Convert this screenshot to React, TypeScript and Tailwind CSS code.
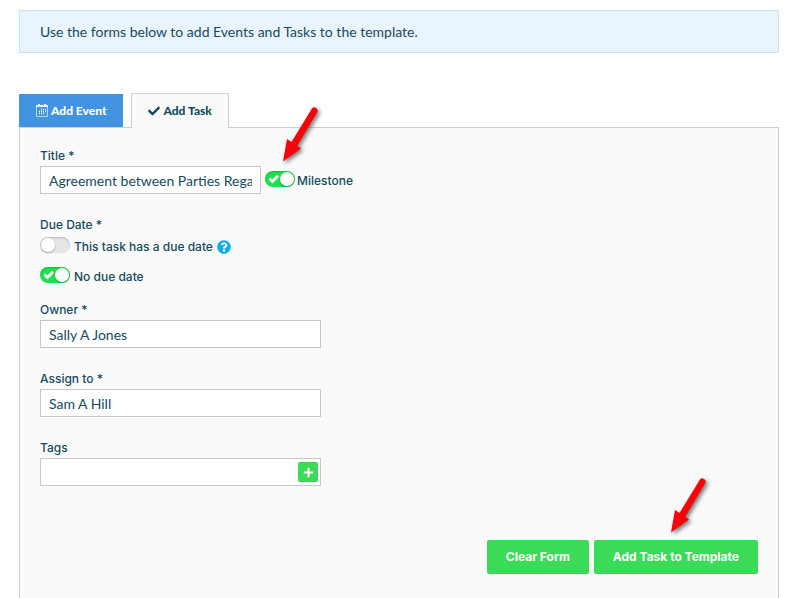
import { useState } from 'react';
import type { ReactNode } from 'react';
import { FaCheck, FaPlus, FaQuestionCircle } from 'react-icons/fa';

function CalendarIcon() {
  return (
    <svg viewBox="0 0 12 13" className="w-3 h-[13px]" fill="none" stroke="currentColor">
      <path d="M0.500 3v9.500h11V3" strokeOpacity="0.65" />
      <path d="M0 2h12" strokeWidth="2" strokeOpacity="0.9" />
      <path d="M2 0.500h2M8 0.500h2" />
      <path d="M5 5.500h1M7 5.500h1M9 5.500h1M3 7.500h1M5 7.500h1M7 7.500h1M9 7.500h1M3 9.500h1M5 9.500h1M7 9.500h1" strokeWidth="1.300" />
    </svg>
  );
}

function Arrow({ className }: { className: string }) {
  return (
    <svg
      viewBox="0 0 50 68"
      className={`absolute w-[50px] h-[68px] pointer-events-none drop-shadow-[2px_2px_2px_rgba(0,0,0,0.55)] ${className}`}
      fill="#fb0007"
      aria-hidden="true"
    >
      <path d="M5 59.500L9 37L13.500 40L33.800 6.800A3.200 3.200 0 0 1 39.300 10L19.200 43.800L23 46.500Z" />
    </svg>
  );
}

function Toggle({ id, checked, onChange }: { id: string; checked: boolean; onChange: (v: boolean) => void }) {
  return (
    <span className="relative inline-flex w-[30px] h-4 shrink-0">
      <input
        id={id}
        type="checkbox"
        checked={checked}
        onChange={(e) => onChange(e.target.checked)}
        className="appearance-none w-full h-full rounded-full bg-[#e6e6e6] checked:bg-[#1fe04f] shadow-[inset_0_1px_2px_rgba(0,0,0,0.2)] cursor-pointer"
      />
      {checked && (
        <svg viewBox="0 0 12 10" className="absolute left-[3px] top-[3px] w-3 h-[10px] pointer-events-none" fill="none" stroke="#fff" strokeWidth="2.800">
          <path d="M1.500 4.500L4.500 7.500L10 1.800" />
        </svg>
      )}
      <span
        className={`absolute top-px w-[14px] h-[14px] rounded-full bg-white pointer-events-none shadow-[0_1px_2px_rgba(0,0,0,0.3)] ${checked ? 'right-px' : 'left-px'}`}
      />
    </span>
  );
}

function Field({ id, label, children }: { id: string; label: string; children: ReactNode }) {
  return (
    <div className="mb-[23px]">
      <label htmlFor={id} className="block mb-[2px] leading-4">{label}</label>
      {children}
    </div>
  );
}

const INPUT = 'h-7 px-2 border border-[#c8c8c8] bg-white font-[Lato,sans-serif] text-sm font-normal outline-none';
const BUTTON = 'h-[34px] px-[19px] rounded-xs bg-[#3bdb57] text-white font-bold hover:bg-[#32c94d]';

export default function App() {
  const [title, setTitle] = useState('Agreement between Parties Regarding Terms');
  const [owner, setOwner] = useState('Sally A Jones');
  const [assignee, setAssignee] = useState('Sam A Hill');
  const [tags, setTags] = useState('');
  const [milestone, setMilestone] = useState(true);
  const [hasDueDate, setHasDueDate] = useState(false);

  const clearForm = () => {
    setTitle('');
    setOwner('');
    setAssignee('');
    setTags('');
    setMilestone(false);
  };

  return (
    <main className="min-h-screen flex flex-col pl-[19px] pr-[22px] pt-[10px] bg-white text-[#174a5e]">
      <div className="border border-[#c5e3fc] bg-[#e9f4ff] px-5 py-[10px] font-[Lato,sans-serif] text-sm leading-[21px]">
        Use the forms below to add Events and Tasks to the template.
      </div>

      <div role="tablist" className="relative mt-10 flex items-end gap-2 font-[Lato,sans-serif] text-[12px] font-black">
        <button role="tab" aria-selected={false} className="h-[33px] px-[17px] flex items-center gap-[3px] bg-[#4294e3] text-white">
          <CalendarIcon />
          Add Event
        </button>
        <button role="tab" aria-selected={true} className="-mb-px h-[35px] px-4 flex items-center gap-[3px] border border-b-0 border-[#cfcfcf] bg-[#fafafa]">
          <FaCheck className="w-3 h-3" />
          Add Task
        </button>
      </div>

      <form
        onSubmit={(e) => e.preventDefault()}
        className="flex-1 border border-b-0 border-[#cfcfcf] bg-[#fafafa] px-5 pt-5 pb-6 font-[Inter,sans-serif] text-[12px] font-medium"
      >
        <Field id="title" label="Title *">
          <div className="flex items-center gap-1">
            <input id="title" value={title} onChange={(e) => setTitle(e.target.value)} className={`w-[221px] ${INPUT}`} />
            <div className="relative flex items-start gap-[2px] pt-[2px]">
              <Toggle id="milestone" checked={milestone} onChange={setMilestone} />
              <label htmlFor="milestone" className="leading-5">Milestone</label>
              <Arrow className="left-[13px] -top-[67px]" />
            </div>
          </div>
        </Field>

        <fieldset className="mb-[15px]">
          <legend className="mb-1 leading-4">Due Date *</legend>
          <div className="flex items-start gap-1 mb-[10px]">
            <Toggle id="has-due-date" checked={hasDueDate} onChange={setHasDueDate} />
            <label htmlFor="has-due-date" className="leading-5">This task has a due date</label>
            <FaQuestionCircle className="mt-[3px] w-[14px] h-[14px] text-[#0daee8]" />
          </div>
          <div className="flex items-start gap-1">
            <Toggle id="no-due-date" checked={!hasDueDate} onChange={(v) => setHasDueDate(!v)} />
            <label htmlFor="no-due-date" className="leading-5">No due date</label>
          </div>
        </fieldset>

        <Field id="owner" label="Owner *">
          <input id="owner" value={owner} onChange={(e) => setOwner(e.target.value)} className={`block w-[281px] ${INPUT}`} />
        </Field>

        <Field id="assignee" label="Assign to *">
          <input id="assignee" value={assignee} onChange={(e) => setAssignee(e.target.value)} className={`block w-[281px] ${INPUT}`} />
        </Field>

        <Field id="tags" label="Tags">
          <div className="relative w-[281px]">
            <input id="tags" value={tags} onChange={(e) => setTags(e.target.value)} className={`block w-full ${INPUT}`} />
            <button type="button" aria-label="Add tag" className="absolute right-[3px] top-1 w-5 h-5 rounded-xs bg-[#3bdb57] text-white flex items-center justify-center">
              <FaPlus className="w-[11px] h-[11px]" />
            </button>
          </div>
        </Field>

        <div className="mt-[54px] flex justify-end gap-[5px]">
          <button type="button" onClick={clearForm} className={BUTTON}>Clear Form</button>
          <div className="relative">
            <button type="submit" className={BUTTON}>Add Task to Template</button>
            <Arrow className="right-[42px] -top-[67px]" />
          </div>
        </div>
      </form>
    </main>
  );
}
